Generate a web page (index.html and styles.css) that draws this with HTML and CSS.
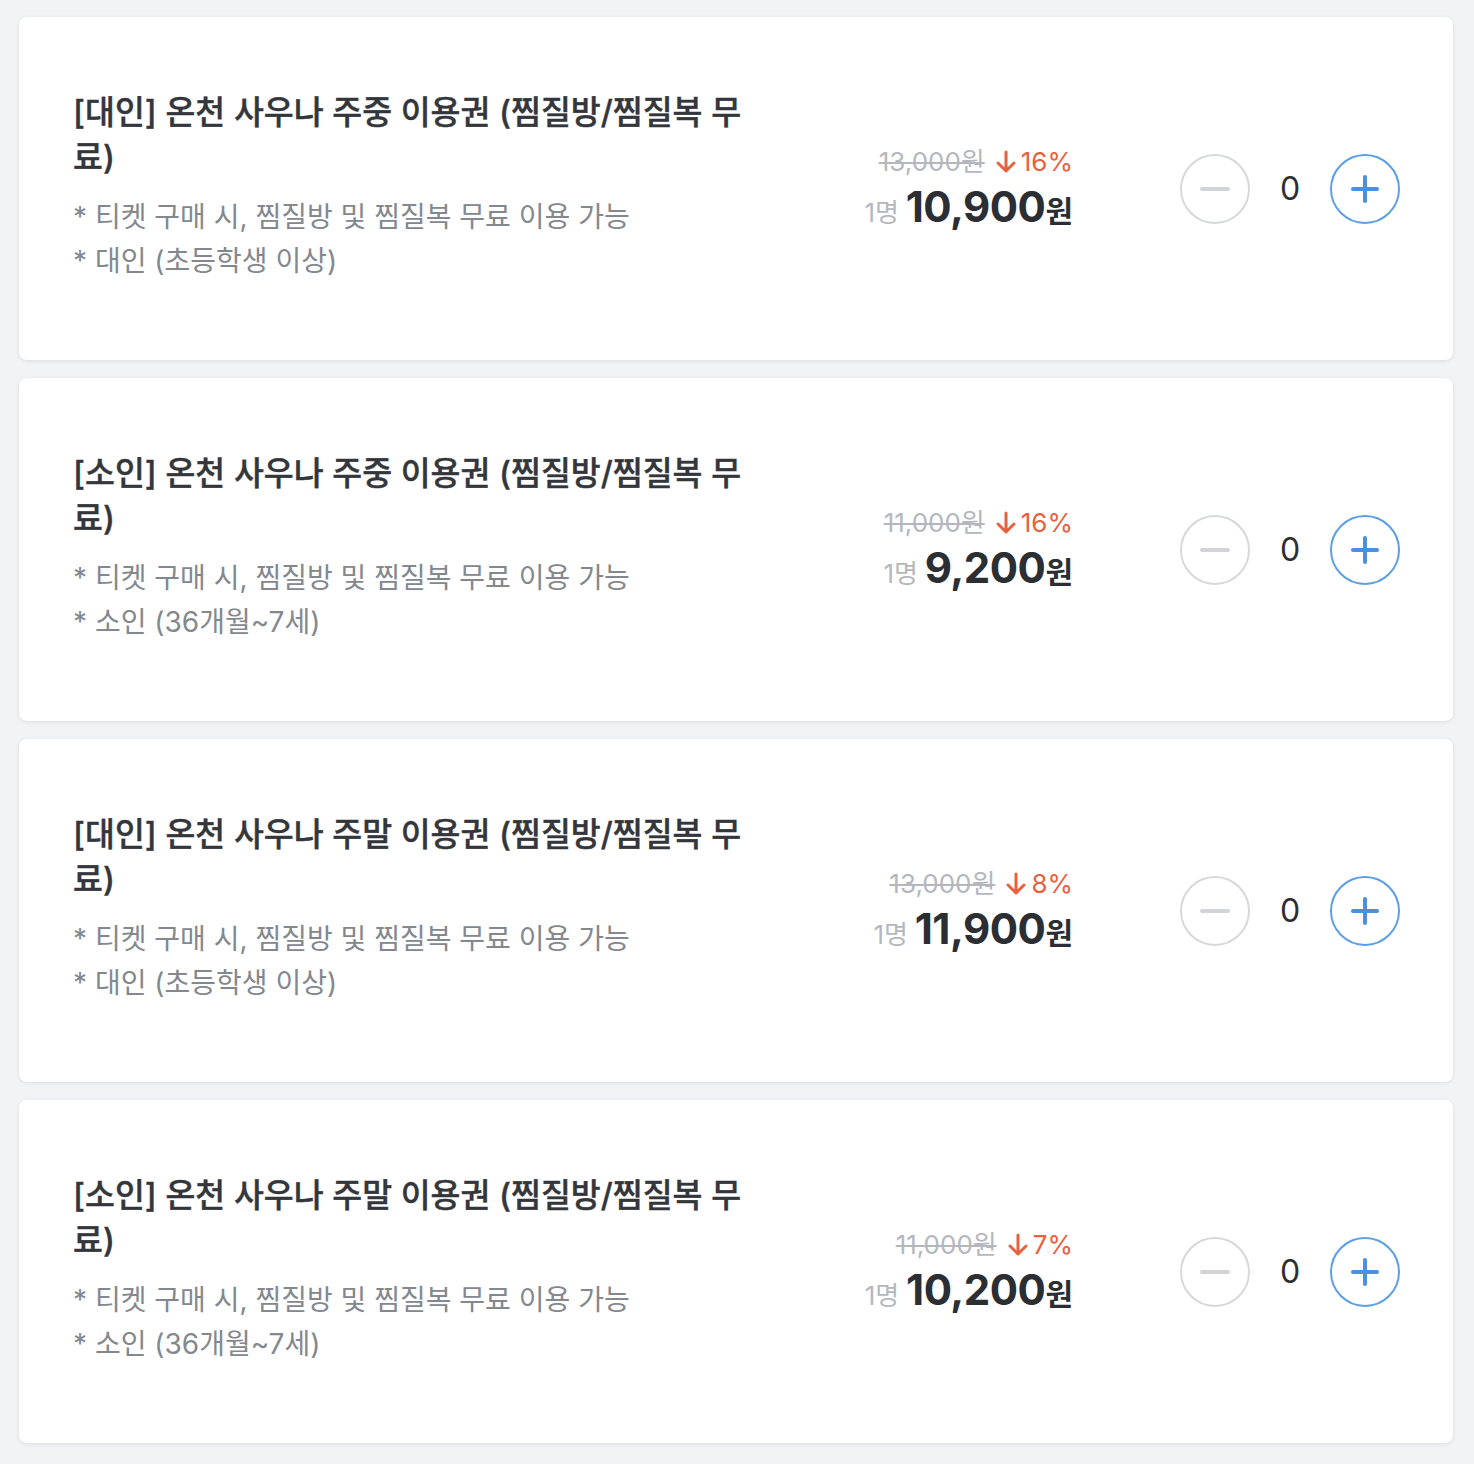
FILE: index.html
```html
<!DOCTYPE html>
<html lang="ko">
<head>
    <meta charset="UTF-8">
    <meta name="viewport" content="width=device-width, initial-scale=1.0">
    <title>온천 사우나 이용권</title>
    <link rel="stylesheet" href="styles.css">
</head>
<body>
    <div class="ticket-list">
        <div class="ticket-card">
            <div class="ticket-info">
                <h2 class="ticket-title">[대인] 온천 사우나 주중 이용권 (찜질방/찜질복 무료)</h2>
                <p class="ticket-desc">* 티켓 구매 시, 찜질방 및 찜질복 무료 이용 가능</p>
                <p class="ticket-desc">* 대인 (초등학생 이상)</p>
            </div>
            <div class="ticket-price">
                <div class="price-origin">
                    <s>13,000원</s>
                    <span class="discount"><svg class="arrow" viewBox="0 0 22 24"><path d="M11 2v19M3 13l8 8 8-8"/></svg>16%</span>
                </div>
                <div class="price-main"><span class="unit">1명</span> <span class="amount">10,900</span><span class="won">원</span></div>
            </div>
            <div class="stepper">
                <button class="step-btn minus"><span class="bar"></span></button>
                <span class="count">0</span>
                <button class="step-btn plus"><span class="bar"></span><span class="bar vertical"></span></button>
            </div>
        </div>

        <div class="ticket-card">
            <div class="ticket-info">
                <h2 class="ticket-title">[소인] 온천 사우나 주중 이용권 (찜질방/찜질복 무료)</h2>
                <p class="ticket-desc">* 티켓 구매 시, 찜질방 및 찜질복 무료 이용 가능</p>
                <p class="ticket-desc">* 소인 (36개월~7세)</p>
            </div>
            <div class="ticket-price">
                <div class="price-origin">
                    <s>11,000원</s>
                    <span class="discount"><svg class="arrow" viewBox="0 0 22 24"><path d="M11 2v19M3 13l8 8 8-8"/></svg>16%</span>
                </div>
                <div class="price-main"><span class="unit">1명</span> <span class="amount">9,200</span><span class="won">원</span></div>
            </div>
            <div class="stepper">
                <button class="step-btn minus"><span class="bar"></span></button>
                <span class="count">0</span>
                <button class="step-btn plus"><span class="bar"></span><span class="bar vertical"></span></button>
            </div>
        </div>

        <div class="ticket-card">
            <div class="ticket-info">
                <h2 class="ticket-title">[대인] 온천 사우나 주말 이용권 (찜질방/찜질복 무료)</h2>
                <p class="ticket-desc">* 티켓 구매 시, 찜질방 및 찜질복 무료 이용 가능</p>
                <p class="ticket-desc">* 대인 (초등학생 이상)</p>
            </div>
            <div class="ticket-price">
                <div class="price-origin">
                    <s>13,000원</s>
                    <span class="discount"><svg class="arrow" viewBox="0 0 22 24"><path d="M11 2v19M3 13l8 8 8-8"/></svg>8%</span>
                </div>
                <div class="price-main"><span class="unit">1명</span> <span class="amount">11,900</span><span class="won">원</span></div>
            </div>
            <div class="stepper">
                <button class="step-btn minus"><span class="bar"></span></button>
                <span class="count">0</span>
                <button class="step-btn plus"><span class="bar"></span><span class="bar vertical"></span></button>
            </div>
        </div>

        <div class="ticket-card">
            <div class="ticket-info">
                <h2 class="ticket-title">[소인] 온천 사우나 주말 이용권 (찜질방/찜질복 무료)</h2>
                <p class="ticket-desc">* 티켓 구매 시, 찜질방 및 찜질복 무료 이용 가능</p>
                <p class="ticket-desc">* 소인 (36개월~7세)</p>
            </div>
            <div class="ticket-price">
                <div class="price-origin">
                    <s>11,000원</s>
                    <span class="discount"><svg class="arrow" viewBox="0 0 22 24"><path d="M11 2v19M3 13l8 8 8-8"/></svg>7%</span>
                </div>
                <div class="price-main"><span class="unit">1명</span> <span class="amount">10,200</span><span class="won">원</span></div>
            </div>
            <div class="stepper">
                <button class="step-btn minus"><span class="bar"></span></button>
                <span class="count">0</span>
                <button class="step-btn plus"><span class="bar"></span><span class="bar vertical"></span></button>
            </div>
        </div>
    </div>
</body>
</html>
```

FILE: styles.css
```css
* {
    margin: 0;
    padding: 0;
    box-sizing: border-box;
}

body {
    font-family: 'Inter', 'Noto Sans CJK KR', sans-serif;
    background: #f2f3f5;
    padding: 17px 21px 17px 19px;
}

.ticket-list {
    display: flex;
    flex-direction: column;
    gap: 18px;
}

.ticket-card {
    display: flex;
    align-items: center;
    height: 343px;
    padding: 0 53px 0 54px;
    background: white;
    border-radius: 8px;
    box-shadow: 0 1px 4px rgba(0, 0, 0, 0.09);
}

.ticket-info {
    flex: 0 0 690px;
    margin-top: -5px;
}

.ticket-title {
    font-size: 32.5px;
    font-weight: 500;
    -webkit-text-stroke: 0.4px currentColor;
    line-height: 45px;
    color: #33363b;
    margin-bottom: 15px;
}

.ticket-desc {
    font-size: 28px;
    line-height: 44px;
    color: #83888f;
}

.ticket-price {
    margin-left: auto;
    margin-top: 12px;
    text-align: right;
}

.price-origin {
    font-size: 26px;
    line-height: 34px;
    color: #b4b8be;
    display: flex;
    justify-content: flex-end;
    align-items: center;
    gap: 10px;
}

.price-origin s {
    text-decoration-thickness: 2px;
}

.discount {
    color: #e8613f;
    display: flex;
    align-items: center;
    gap: 4px;
}

.arrow {
    width: 22px;
    height: 24px;
    fill: none;
    stroke: #e8613f;
    stroke-width: 3;
    stroke-linecap: round;
    stroke-linejoin: round;
}

.price-main {
    line-height: 56px;
    color: #2b2e33;
    font-weight: 700;
}

.price-main .unit {
    font-size: 26px;
    font-weight: 400;
    color: #b4b8be;
    margin-right: 3px;
}

.price-main .amount {
    font-size: 42px;
    letter-spacing: -0.5px;
}

.price-main .won {
    font-size: 30px;
}

.stepper {
    display: flex;
    align-items: center;
    margin-left: 107px;
}

.step-btn {
    position: relative;
    width: 70px;
    height: 70px;
    border-radius: 50%;
    background: white;
    border: 2px solid #d6d8dc;
    cursor: pointer;
}

.step-btn .bar {
    position: absolute;
    left: 50%;
    top: 50%;
    width: 30px;
    height: 4px;
    margin: -2px 0 0 -15px;
    border-radius: 2px;
    background: #d2d4d8;
}

.step-btn.plus {
    border-color: #5b9fe6;
}

.step-btn.plus .bar {
    width: 28px;
    margin-left: -14px;
    background: #4a8fe0;
}

.step-btn.plus .bar.vertical {
    width: 4px;
    height: 28px;
    margin: -14px 0 0 -2px;
}

.count {
    width: 80px;
    text-align: center;
    font-size: 32px;
    color: #2b2e33;
}
```
